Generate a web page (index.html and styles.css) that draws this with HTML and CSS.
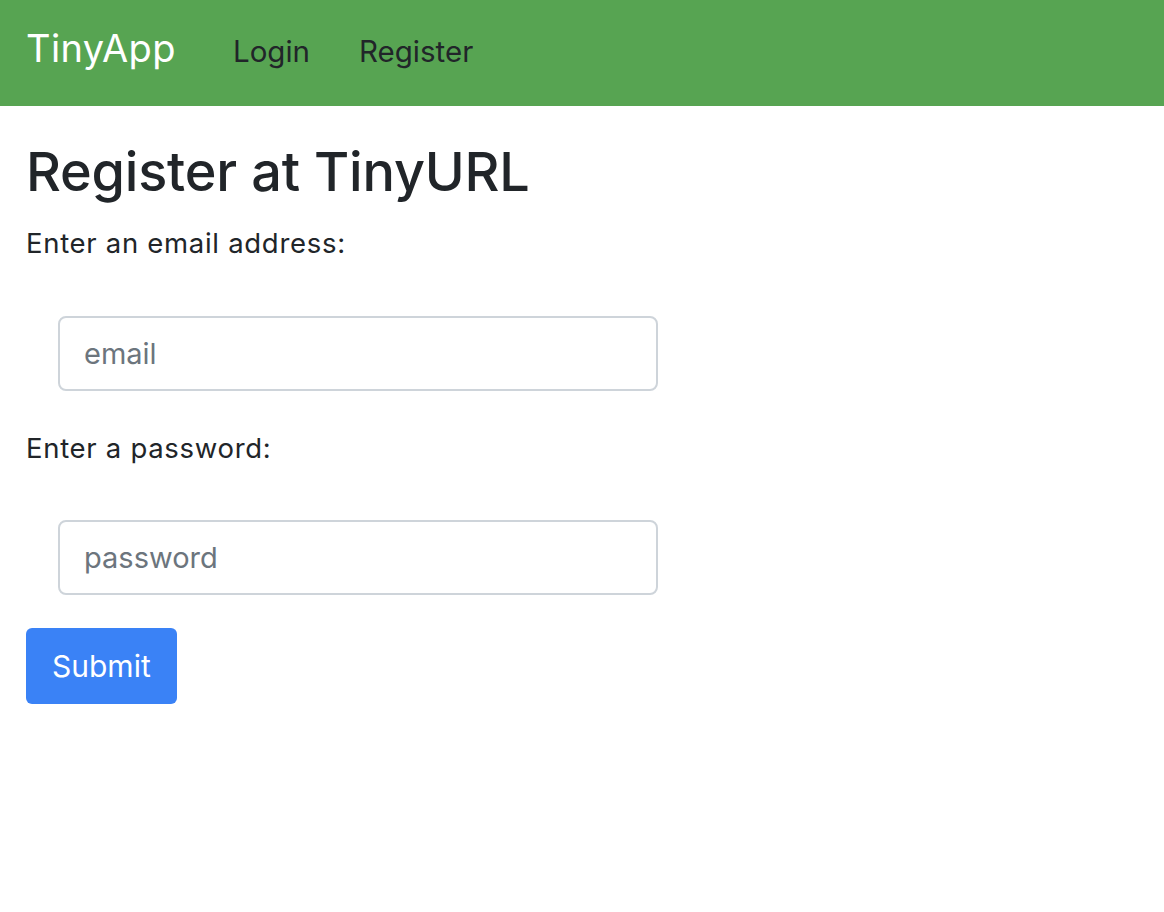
FILE: index.html
```html
<!DOCTYPE html>
<html lang="en">
<head>
<meta charset="utf-8">
<title>TinyApp</title>
<link rel="stylesheet" href="styles.css">
</head>
<body>
<nav class="navbar">
  <a class="brand" href="#">TinyApp</a>
  <a class="nav-link nav-login" href="#">Login</a>
  <a class="nav-link" href="#">Register</a>
</nav>
<main class="content">
  <h1 class="title">Register at TinyURL</h1>
  <form class="form">
    <label class="label" for="email">Enter an email address:</label>
    <div class="field"><input class="input" id="email" type="text" placeholder="email"></div>
    <label class="label" for="password">Enter a password:</label>
    <div class="field field-last"><input class="input" id="password" type="password" placeholder="password"></div>
    <button class="btn" type="submit">Submit</button>
  </form>
</main>
</body>
</html>
```
FILE: styles.css
```css
* { box-sizing: border-box; }
body {
  margin: 0;
  font-family: Inter, "Noto Sans", sans-serif;
  color: #212529;
  background: #fff;
}
.navbar {
  height: 106px;
  background: #57a452;
  display: flex;
  align-items: baseline;
  padding: 26px 26px 0;
}
.brand {
  color: #fff;
  text-decoration: none;
  font-size: 38px;
  letter-spacing: 0.4px;
  line-height: 1.2;
  margin-right: 57px;
}
.nav-link {
  color: #212529;
  text-decoration: none;
  font-size: 29.5px;
  line-height: 1.2;
}
.nav-login { margin-right: 49px; }
.content { padding: 0 26px; }
.title {
  font-size: 54px;
  font-weight: 500;
  letter-spacing: -0.2px;
  line-height: 66px;
  margin: 33px 0 19px;
}
.form {
  display: flex;
  flex-direction: column;
  align-items: flex-start;
}
.label {
  font-size: 27.5px;
  letter-spacing: 0.7px;
  line-height: 39px;
}
.field { padding: 53px 0 38px 32px; }
.field-last { padding: 52px 0 33px 32px; }
.input {
  width: 600px;
  height: 75px;
  border: 2px solid #ced4da;
  border-radius: 8px;
  padding: 13px 24px;
  font-family: inherit;
  font-size: 29px;
  line-height: 45px;
  color: #495057;
  background: #fff;
}
.input::placeholder { color: #6c757d; }
.btn {
  background: #3a82f6;
  color: #fff;
  border: 0;
  border-radius: 6px;
  font-family: inherit;
  font-size: 30px;
  line-height: 46px;
  padding: 15px 26px;
}
```
